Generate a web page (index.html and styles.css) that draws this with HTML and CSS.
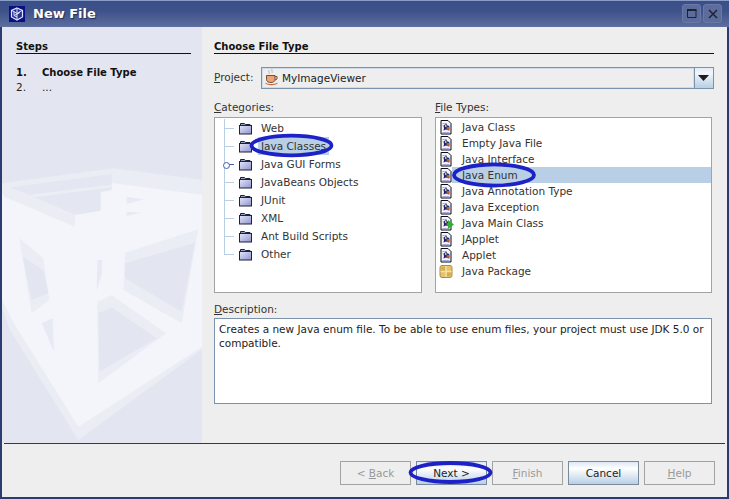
FILE: index.html
```html
<!DOCTYPE html>
<html lang="en">
<head>
<meta charset="utf-8">
<title>New File</title>
<link rel="stylesheet" href="styles.css">
</head>
<body>
<svg class="defs" width="0" height="0" aria-hidden="true">
  <defs>
    <linearGradient id="fg" x1="0" y1="0" x2="1" y2="1">
      <stop offset="0" stop-color="#e4e6f8"/>
      <stop offset="1" stop-color="#8f93d0"/>
    </linearGradient>
  </defs>
  <symbol id="folder" viewBox="0 0 13 13">
    <path d="M1.500 3V1.500h4l1 1H11V4" fill="#8fa0c4" stroke="#1c2238" stroke-width="1"/>
    <rect x="0.500" y="3.500" width="12" height="8.500" fill="url(#fg)" stroke="#1c2238" stroke-width="1"/>
  </symbol>
  <symbol id="jfile" viewBox="0 0 13 15">
    <path d="M1.500 .5h7l3 3v10.500h-10z" fill="#f4f5fb" stroke="#0c0c14" stroke-width="1"/>
    <path d="M3 3h2v1H3zM3 5h1v1H3zM3 12h7v1H3zM9 6h1v5H9z" fill="#a5a8dc"/>
    <path d="M4 6l2.500-3 1.500 2.500 2 .5-1.500 2 .5 2.500-2.500-1-2.500 1 .5-2.500z" fill="#1a2680"/>
    <path d="M5.500 4.500h1.500V7H5.500z" fill="#e8c24a"/>
    <rect x="7" y="7" width="3" height="3" fill="#d0531c"/>
  </symbol>
  <symbol id="pkg" viewBox="0 0 13 13">
    <rect x="0.500" y="0.500" width="12" height="12" rx="2" fill="#e4c26a" stroke="#a98c4c"/>
    <path d="M6.500 1v11M1 6.500h11" stroke="#f3e1a8" stroke-width="1.400"/>
    <path d="M2 2h3.500v3.500H2zM7.500 7.500H11V11H7.500z" fill="#d3ab52"/>
  </symbol>
</svg>

<main class="window">
  <header class="titlebar">
    <svg class="logo" width="16" height="16" viewBox="0 0 16 16" aria-hidden="true">
      <rect width="16" height="16" fill="#0a0f86"/>
      <path d="M8 2l5.500 2.500v6.500L8 14l-5.500-3V4.500z" fill="#26308f" stroke="#dfe4ff" stroke-width="1.200"/>
      <path d="M8 2.500v5l5 -3M8 7.500l-5 -3M8 7.500v6M5 9.500l6 -3M5 5.500v4l3 1.500" fill="none" stroke="#dfe4ff" stroke-width="1"/>
    </svg>
    <h1 class="title">New File</h1>
    <div class="winbtns">
      <span class="winbtn"><svg width="10" height="9" viewBox="0 0 10 9" aria-hidden="true"><path d="M.5 1h8.500v7.500H.5z" fill="none" stroke="#1d2230"/><path d="M0 0h9.500v2H0z" fill="#1d2230"/></svg></span>
      <span class="winbtn"><svg width="10" height="10" viewBox="0 0 10 10" aria-hidden="true"><path d="M1 1l8 8M9 1l-8 8" stroke="#1d2230" stroke-width="1.500"/></svg></span>
    </div>
  </header>

  <div class="content">
    <aside class="sidebar">
      <svg class="watermark" viewBox="2 27 200 416" aria-hidden="true">
        <g transform="translate(0 100) scale(.33333)">
          <path d="M6 250L340 205 610 240V745L235 1020 30 690 6 620z" fill="#ebedf5"/>
          <path d="M6 285L340 250 610 285V738L235 980 42 670 6 600z" fill="#f4f5fb"/>
          <path d="M30 262L335 222V270L302 276V332L225 345z" fill="#e4e7f1"/>
          <path d="M90 284L335 254V262L100 292z" fill="#eceef6"/>
          <path d="M12 262L30 262 225 345 225 380 12 290z" fill="#ebedf5"/>
          <path d="M380 290L432 298 380 312zM380 335L425 338 380 348z" fill="#e8eaf3"/>
          <path d="M58 415L130 475 148 600 95 640z" fill="#ebedf5"/>
          <path d="M68 470L130 510 145 580 95 600z" fill="#e3e6f0"/>
          <path d="M375 458L595 388 545 670 370 570z" fill="#ebedf5"/>
          <path d="M375 490L585 428 545 635 375 535z" fill="#e3e6f0"/>
          <path d="M292 480L306 480 306 520 290 572z" fill="#e8eaf3"/>
          <path d="M292 605L335 585 498 700 295 850z" fill="#ebedf5"/>
          <path d="M295 640L335 622 470 715 298 815z" fill="#e3e6f0"/>
          <path d="M125 670L158 655 162 755z" fill="#e7e9f3"/>
        </g>
      </svg>
      <div class="side-inner">
        <h2 class="heading">Steps</h2>
        <ol class="steps">
          <li class="step step-active"><span class="num">1.</span><span>Choose File Type</span></li>
          <li class="step"><span class="num">2.</span><span>...</span></li>
        </ol>
      </div>
    </aside>

    <section class="panel">
      <h2 class="heading">Choose File Type</h2>
      <div class="project">
        <label class="lab"><u>P</u>roject:</label>
        <div class="combo">
          <div class="combo-val">
            <svg class="cup" width="13" height="17" viewBox="0 0 13 17" aria-hidden="true">
              <path d="M4 1c-1 1.500 1 2.500 0 4M7 0c-1 1.500 1 2.500 0 4" stroke="#bdbdbd" fill="none"/>
              <path d="M1.500 6.500h8.500v4c0 2-1.800 3-4.200 3S1.500 12.500 1.500 10.500z" fill="#e8a47c" stroke="#7c4a2c"/>
              <path d="M10 7.500h2v2.500l-2 1" fill="none" stroke="#7c4a2c"/>
              <path d="M.5 13.500c2.500 2 9 2 12 0v1c-2.500 2.200-9.500 2.200-12 0z" fill="#c8663a"/>
            </svg>
            <span>MyImageViewer</span>
          </div>
          <div class="combo-btn"><svg width="12" height="7" viewBox="0 0 12 7" aria-hidden="true"><path d="M0 0h11L5.500 6z" fill="#1d1d1d"/></svg></div>
        </div>
      </div>

      <div class="lists">
        <div class="col col-cat">
          <label class="lab"><u>C</u>ategories:</label>
          <div class="box tree">
            <div class="tree-row"><span class="stub"></span><svg class="ficon" width="13" height="13"><use href="#folder"/></svg><span class="txt">Web</span></div>
            <div class="tree-row"><span class="stub"></span><svg class="ficon" width="13" height="13"><use href="#folder"/></svg><span class="txt sel">Java Classes</span></div>
            <div class="tree-row"><span class="stub knob"></span><svg class="ficon" width="13" height="13"><use href="#folder"/></svg><span class="txt">Java GUI Forms</span></div>
            <div class="tree-row"><span class="stub"></span><svg class="ficon" width="13" height="13"><use href="#folder"/></svg><span class="txt">JavaBeans Objects</span></div>
            <div class="tree-row"><span class="stub"></span><svg class="ficon" width="13" height="13"><use href="#folder"/></svg><span class="txt">JUnit</span></div>
            <div class="tree-row"><span class="stub"></span><svg class="ficon" width="13" height="13"><use href="#folder"/></svg><span class="txt">XML</span></div>
            <div class="tree-row"><span class="stub"></span><svg class="ficon" width="13" height="13"><use href="#folder"/></svg><span class="txt">Ant Build Scripts</span></div>
            <div class="tree-row tree-last"><span class="stub"></span><svg class="ficon" width="13" height="13"><use href="#folder"/></svg><span class="txt">Other</span></div>
          </div>
        </div>
        <div class="col col-types">
          <label class="lab"><u>F</u>ile Types:</label>
          <div class="box types">
            <div class="type-row"><svg class="ticon" width="13" height="15"><use href="#jfile"/></svg><span>Java Class</span></div>
            <div class="type-row"><svg class="ticon" width="13" height="15"><use href="#jfile"/></svg><span>Empty Java File</span></div>
            <div class="type-row"><svg class="ticon" width="13" height="15"><use href="#jfile"/></svg><span>Java Interface</span></div>
            <div class="type-row type-sel"><svg class="ticon" width="13" height="15"><use href="#jfile"/></svg><span class="type-txt">Java Enum</span></div>
            <div class="type-row"><svg class="ticon" width="13" height="15"><use href="#jfile"/></svg><span>Java Annotation Type</span></div>
            <div class="type-row"><svg class="ticon" width="13" height="15"><use href="#jfile"/></svg><span>Java Exception</span></div>
            <div class="type-row"><span class="iconwrap"><svg class="ticon" width="13" height="15"><use href="#jfile"/></svg><svg class="arrow" width="6" height="9" viewBox="0 0 6 9" aria-hidden="true"><path d="M0 0l6 4.500L0 9z" fill="#2fae3a"/></svg></span><span>Java Main Class</span></div>
            <div class="type-row"><svg class="ticon" width="13" height="15"><use href="#jfile"/></svg><span>JApplet</span></div>
            <div class="type-row"><svg class="ticon" width="13" height="15"><use href="#jfile"/></svg><span>Applet</span></div>
            <div class="type-row"><svg class="ticon" width="13" height="13"><use href="#pkg"/></svg><span>Java Package</span></div>
          </div>
        </div>
      </div>

      <label class="lab lab-desc"><u>D</u>escription:</label>
      <div class="desc">Creates a new Java enum file. To be able to use enum files, your project must use JDK 5.0 or compatible.</div>
    </section>
  </div>

  <footer class="footer">
    <button class="btn" disabled>&lt; <u>B</u>ack</button>
    <button class="btn btn-on">Next &gt;</button>
    <button class="btn" disabled><u>F</u>inish</button>
    <button class="btn btn-on">Cancel</button>
    <button class="btn" disabled><u>H</u>elp</button>
  </footer>

  <svg class="annot" width="729" height="499" viewBox="0 0 729 499" aria-hidden="true">
    <ellipse cx="291.500" cy="145.500" rx="40" ry="9.800"/>
    <ellipse cx="494" cy="175" rx="40" ry="10.500"/>
    <ellipse cx="450.500" cy="472.500" rx="40" ry="9.500"/>
  </svg>
</main>
</body>
</html>
```
FILE: styles.css
```css
* { box-sizing: border-box; }
html, body { margin: 0; padding: 0; }
body {
  width: 729px;
  height: 499px;
  overflow: hidden;
  font-family: "DejaVu Sans", sans-serif;
  font-size: 10.500px;
  color: #222;
  background: #eeeeee;
}
.defs { position: absolute; }
h1, h2, ol { margin: 0; padding: 0; }
ol { list-style: none; }

.window {
  position: relative;
  width: 729px;
  height: 499px;
  display: flex;
  flex-direction: column;
  background: #eeeeee;
  border-left: 2px solid #2d3c6e;
  border-right: 2px solid #2d3c6e;
  border-bottom: 2px solid #2d3c6e;
}
.titlebar {
  flex: none;
  height: 27px;
  margin: 0 -2px;
  display: flex;
  align-items: center;
  padding: 0 7px 0 9px;
  background: linear-gradient(#3a4f89, #3f5289 40%, #5b6c9d);
  border-top: 1px solid #8b9cc6;
  border-bottom: 1px solid #5f70a0;
}
.logo { flex: none; }
.title {
  margin-left: 8px;
  font-size: 13px;
  font-weight: bold;
  color: #fff;
  text-shadow: 1px 1px 1px #222c55;
}
.winbtns { margin-left: auto; display: flex; gap: 2px; }
.winbtn {
  width: 19px;
  height: 19px;
  display: flex;
  align-items: center;
  justify-content: center;
  background: #5c6c9c;
  border: 1px solid #6a79a8;
  border-radius: 3px;
}

.content { flex: 1; min-height: 0; display: flex; }
.sidebar {
  position: relative;
  flex: none;
  width: 200px;
  background: #e3e6f0;
  overflow: hidden;
}
.watermark { position: absolute; left: 0; top: 0; width: 200px; height: 416px; filter: blur(.6px); }
.side-inner { position: relative; padding: 13px 11px 0 14px; }
.heading {
  font-size: 10px;
  font-weight: bold;
  line-height: 13px;
  border-bottom: 1px solid #111;
  color: #111;
  height: 14px;
}
.steps { margin-top: 11px; }
.step { display: flex; line-height: 15px; height: 15px; color: #222; }
.step-active { font-size: 10px; font-weight: bold; color: #111; }
.num { width: 26px; flex: none; }

.panel { flex: 1; min-width: 0; padding: 13px 13px 0 12px; display: flex; flex-direction: column; }
.project { margin-top: 12px; height: 24px; display: flex; align-items: center; }
.lab { display: block; color: #333; line-height: 13px; }
.project .lab { width: 47px; flex: none; padding-bottom: 2px; height: 15px; }
.combo { flex: 1; height: 22px; display: flex; border: 1px solid #7c92ab; background: #eee; }
.combo-val {
  flex: 1;
  display: flex;
  align-items: center;
  gap: 4px;
  padding: 0 0 1px 2px;
  border: 1px solid #cfdbe8;
  border-right: 1px solid #d6dfe8;
}
.combo-btn {
  flex: none;
  width: 19px;
  display: flex;
  align-items: center;
  justify-content: center;
  border-left: 1px solid #7c92ab;
  background: linear-gradient(#e2ebf4, #f2f6fa 25%, #b8cfe5);
}

.lists { margin-top: 11px; display: flex; }
.col-cat { width: 208px; flex: none; }
.col-types { width: 277px; flex: none; margin-left: 13px; }
.box { margin-top: 3px; height: 176px; background: #fff; border: 1px solid #a3a3a3; }
.tree { padding-top: 1px; position: relative; }
.tree-row { position: relative; height: 18px; display: flex; align-items: center; padding-left: 24px; color: #333; }
.stub { position: absolute; left: 9px; top: 0; width: 10px; height: 18px; border-left: 1px solid #b8cfe5; }
.stub::after { content: ""; position: absolute; left: 0; top: 9px; width: 9px; height: 1px; background: #b8cfe5; }
.tree-last .stub { height: 10px; }
.knob::before {
  content: "";
  position: absolute;
  left: -2px;
  top: 7px;
  width: 5px;
  height: 5px;
  border: 1.500px solid #3f62a6;
  border-radius: 50%;
  background: #fff;
  z-index: 1;
}
.knob::after { background: #3f62a6; left: 3px; width: 6px; }
.ficon { flex: none; }
.txt { margin-left: 6px; padding: 0 3px; line-height: 18px; }
.sel { background: #b8cfe5; }

.types { padding-top: 1px; }
.type-row { height: 16px; display: flex; align-items: center; padding-left: 3px; color: #333; gap: 9px; }
.ticon { flex: none; width: 14px; }
.type-sel { background: linear-gradient(90deg, #fff 16px, #b8cfe5 16px); }
.iconwrap { position: relative; display: flex; flex: none; }
.arrow { position: absolute; left: 9px; top: 4px; }

.lab-desc { margin-top: 10px; }
.desc {
  margin-top: 2px;
  height: 86px;
  width: 498px;
  padding: 3px 4px;
  background: #fff;
  border: 1px solid #7c92ab;
  color: #222;
  line-height: 14px;
}

.footer {
  flex: none;
  height: 54px;
  margin: 0 2px;
  border-top: 1px solid #333a44;
  display: flex;
  justify-content: flex-end;
  gap: 5px;
  padding: 17px 10px 0 0;
}
.btn {
  width: 71px;
  height: 24px;
  padding: 0;
  border: 1px solid #a3a3a3;
  background: #eeeeee;
  color: #999;
  font: inherit;
}
.btn-on {
  border-color: #7a8a99;
  color: #222;
  background: linear-gradient(#dde8f3, #fff 30%, #b8cfe5);
}

.annot { position: absolute; left: -2px; top: 0; pointer-events: none; }
.annot ellipse { fill: none; stroke: #1c22c8; stroke-width: 3.800; }
```
